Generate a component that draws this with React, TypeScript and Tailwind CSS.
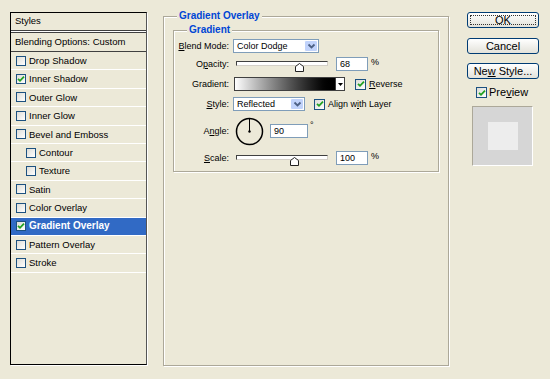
import type { ReactNode } from 'react';

const styleRows = [
  { label: 'Drop Shadow', on: false, sub: false },
  { label: 'Inner Shadow', on: true, sub: false },
  { label: 'Outer Glow', on: false, sub: false },
  { label: 'Inner Glow', on: false, sub: false },
  { label: 'Bevel and Emboss', on: false, sub: false },
  { label: 'Contour', on: false, sub: true },
  { label: 'Texture', on: false, sub: true },
  { label: 'Satin', on: false, sub: false },
  { label: 'Color Overlay', on: false, sub: false },
  { label: 'Gradient Overlay', on: true, sub: false, active: true },
  { label: 'Pattern Overlay', on: false, sub: false },
  { label: 'Stroke', on: false, sub: false },
];

function CheckBox({ on, big }: { on?: boolean; big?: boolean }) {
  return (
    <span
      className={
        (big ? 'w-[11px] h-[11px] ' : 'w-[10px] h-[10px] ') +
        'shrink-0 flex items-center justify-center border border-[#1c5180] bg-gradient-to-br from-[#dcdcd7] to-white'
      }
    >
      {on && (
        <svg width="8" height="8" viewBox="0 0 8 8">
          <path d="M1 3.8 L3 5.8 L7 1.6" fill="none" stroke="#21a121" strokeWidth="1.8" />
        </svg>
      )}
    </span>
  );
}

function Chevron() {
  return (
    <svg width="9" height="7" viewBox="0 0 9 7">
      <path d="M1.5 1.5 L4.5 4.5 L7.5 1.5" fill="none" stroke="#4d6185" strokeWidth="1.8" />
    </svg>
  );
}

function Select({ value, width }: { value: string; width: string }) {
  return (
    <div className={width + ' h-[14px] flex items-center border border-[#7f9db9] bg-white'}>
      <span className="flex-1 pl-[3px] text-[9px] leading-none">{value}</span>
      <span className="w-[14px] h-full flex items-center justify-center bg-[#c1d3fb] border border-white rounded-[2px]">
        <Chevron />
      </span>
    </div>
  );
}

function Slider({ thumb }: { thumb: string }) {
  return (
    <div className="relative ml-[3px] w-[92px] h-[14px]">
      <div className="mt-[4px] w-full h-[5px] border border-[#404040] border-r-[#d4d0c8] border-b-[#d4d0c8] bg-white" />
      <svg className={'absolute top-[6px] ' + thumb} width="9" height="9" viewBox="0 0 9 9">
        <polygon points="0.5,3.5 4.5,0.5 8.5,3.5 8.5,8.5 0.5,8.5" fill="#fff" stroke="#222" strokeWidth="1" />
      </svg>
    </div>
  );
}

function NumBox({ value, width }: { value: string; width: string }) {
  return (
    <div className={width + ' h-[14px] flex items-center border border-[#7f9db9] bg-white pl-[3px] text-[9px] leading-none'}>
      {value}
    </div>
  );
}

function Label({ children }: { children: ReactNode }) {
  return <div className="w-[55px] mr-[4px] shrink-0 text-right text-[9px] leading-none">{children}</div>;
}

function XpButton({ children, isDefault }: { children: ReactNode; isDefault?: boolean }) {
  return (
    <div className="h-[16px] rounded-[3px] border border-[#003c74] bg-gradient-to-b from-white to-[#e3e2da] p-[2px] flex">
      <div
        className={
          (isDefault ? 'border border-dotted border-[#333] ' : '') +
          'flex-1 flex items-center justify-center text-[11px] leading-none'
        }
      >
        <span>{children}</span>
      </div>
    </div>
  );
}

function Legend({ children }: { children: ReactNode }) {
  return (
    <span className="absolute -top-[7px] left-[13px] px-[2px] bg-[#ece9d8] text-[10px] font-bold leading-[12px] text-[#0046d5]">
      {children}
    </span>
  );
}

export default function App() {
  return (
    <div className="w-[550px] h-[379px] overflow-hidden bg-[#ece9d8] flex items-start text-black font-['Liberation_Sans',Arial,sans-serif]">
      {/* Styles list */}
      <div className="ml-[10px] mt-[12px] w-[137px] h-[353px] border border-black border-r-[#555] shadow-[1px_1px_0_#fff] flex flex-col">
        <div className="h-[18px] flex items-center pl-[4px] text-[9.5px] border-b border-[#404040]">Styles</div>
        <div className="h-[1px] bg-[#fff]" />
        <div className="h-[20px] flex items-center pl-[4px] text-[9.5px] border-y border-[#404040]">
          Blending Options: Custom
        </div>
        {styleRows.map((r) => (
          <div
            key={r.label}
            className={
              (r.active ? 'bg-[#316ac5] text-white font-bold text-[10px] ' : 'text-[9.5px] ') +
              (r.sub ? 'pl-[15px] ' : 'pl-[5px] ') +
              'h-[18.4px] flex items-center gap-[3px] border-b border-white'
            }
          >
            <CheckBox on={r.on} />
            <span className="leading-none">{r.label}</span>
          </div>
        ))}
      </div>

      {/* Gradient Overlay panel */}
      <div className="relative ml-[16px] mt-[16px] w-[286px] h-[350px] border border-[#aca899] shadow-[inset_1px_1px_0_#fff,1px_1px_0_#fff]">
        <Legend>Gradient Overlay</Legend>
        <div className="relative mx-[9px] mt-[13px] h-[142px] border border-[#aca899] shadow-[inset_1px_1px_0_#fff,1px_1px_0_#fff] pt-[8px] flex flex-col">
          <Legend>Gradient</Legend>

          <div className="h-[14px] flex items-center">
            <Label>
              <span className="underline">B</span>lend Mode:
            </Label>
            <Select value="Color Dodge" width="w-[86px]" />
          </div>

          <div className="mt-[4px] h-[14px] flex items-center">
            <Label>
              O<span className="underline">p</span>acity:
            </Label>
            <Slider thumb="left-[59px]" />
            <div className="ml-[8px]">
              <NumBox value="68" width="w-[32px]" />
            </div>
            <span className="ml-[3px] -mt-[4px] text-[9px] leading-none">%</span>
          </div>

          <div className="mt-[6px] h-[14px] flex items-center">
            <Label>Gradient:</Label>
            <div className="ml-[1px] w-[102px] h-[14px] border border-[#404040] bg-gradient-to-r from-white to-black" />
            <div className="w-[9px] h-[14px] border border-l-0 border-[#404040] bg-white flex items-center justify-center">
              <svg width="5" height="3" viewBox="0 0 5 3">
                <polygon points="0,0 5,0 2.5,3" fill="#000" />
              </svg>
            </div>
            <span className="ml-[10px]">
              <CheckBox on big />
            </span>
            <span className="ml-[3px] text-[9px] leading-none">
              <span className="underline">R</span>everse
            </span>
          </div>

          <div className="mt-[6px] h-[14px] flex items-center">
            <Label>
              <span className="underline">S</span>tyle:
            </Label>
            <Select value="Reflected" width="w-[72px]" />
            <span className="ml-[9px]">
              <CheckBox on big />
            </span>
            <span className="ml-[3px] text-[9px] leading-none">
              Align w<span className="underline">i</span>th Layer
            </span>
          </div>

          <div className="mt-[6px] h-[28px] flex items-center">
            <Label>
              A<span className="underline">n</span>gle:
            </Label>
            <svg className="ml-[2px]" width="29" height="29" viewBox="0 0 29 29">
              <circle cx="14.5" cy="14.5" r="13" fill="none" stroke="#000" strokeWidth="1.5" />
              <line x1="14.5" y1="14.5" x2="14.5" y2="2" stroke="#000" strokeWidth="1" />
              <circle cx="14.5" cy="14.5" r="1.2" fill="#000" />
            </svg>
            <div className="ml-[6px]">
              <NumBox value="90" width="w-[38px]" />
            </div>
            <span className="ml-[2px] -mt-[12px] text-[9px] leading-none">°</span>
          </div>

          <div className="mt-[6px] h-[14px] flex items-center">
            <Label>
              <span className="underline">S</span>cale:
            </Label>
            <Slider thumb="left-[54px]" />
            <div className="ml-[8px]">
              <NumBox value="100" width="w-[32px]" />
            </div>
            <span className="ml-[3px] -mt-[4px] text-[9px] leading-none">%</span>
          </div>
        </div>
      </div>

      {/* Buttons */}
      <div className="ml-[18px] mt-[12px] w-[72px] flex flex-col">
        <XpButton isDefault>OK</XpButton>
        <div className="mt-[10px]">
          <XpButton>Cancel</XpButton>
        </div>
        <div className="mt-[9px]">
          <XpButton>
            Ne<span className="underline">w</span> Style...
          </XpButton>
        </div>
        <div className="mt-[8px] ml-[9px] h-[11px] flex items-center gap-[2px]">
          <CheckBox on big />
          <span className="text-[11px] leading-none">
            Pre<span className="underline">v</span>iew
          </span>
        </div>
        <div className="mt-[8px] ml-[5px] w-[61px] h-[60px] border border-[#aca899] border-r-white border-b-white bg-[#d6d6d6] flex items-center justify-center">
          <div className="w-[30px] h-[28px] bg-[#ededed]" />
        </div>
      </div>
    </div>
  );
}
